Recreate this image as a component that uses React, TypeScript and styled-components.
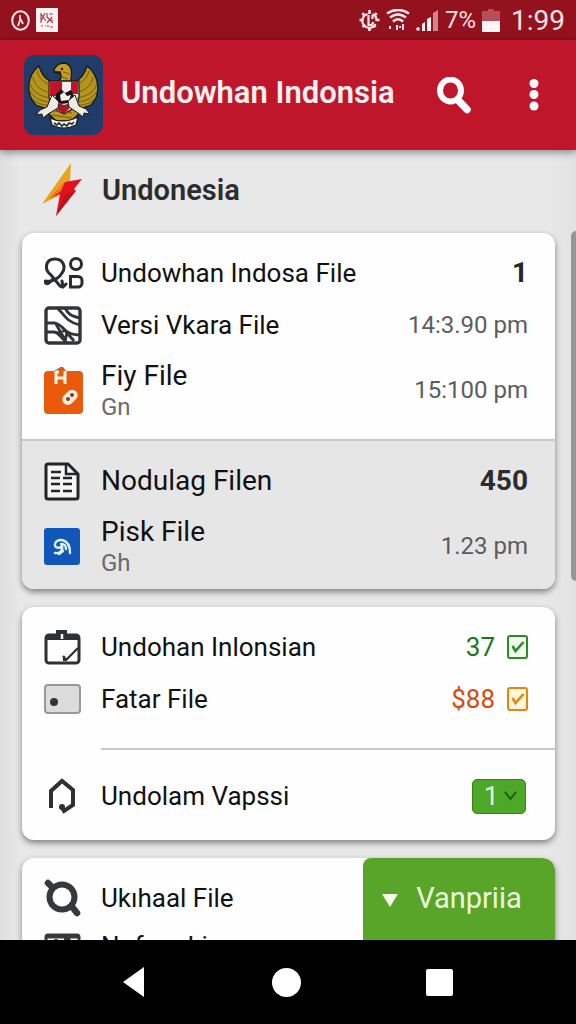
import React from 'react';
import styled, { createGlobalStyle, css } from 'styled-components';

const GlobalStyle = createGlobalStyle`
  *, *::before, *::after { box-sizing: border-box; }
  body { margin: 0; background: #000; font-family: Roboto, "Liberation Sans", sans-serif; color: #111; }
  button, select, input { font: inherit; margin: 0; }
  h1, h2, p, ul { margin: 0; padding: 0; }
  svg { display: block; flex: none; }
`;

const Screen = styled.div`
  display: flex;
  flex-direction: column;
  height: 100vh;
  min-height: 480px;
  overflow: hidden;
`;

const StatusBar = styled.div`
  display: flex;
  align-items: center;
  justify-content: space-between;
  flex: none;
  height: 40px;
  padding: 0 11px;
  background: #94121d;
  color: #fbe3e4;
  font-size: 24px;
`;

const StatusGroup = styled.div`
  display: flex;
  align-items: center;
  gap: 6px;
`;

const Clock = styled.span`
  margin-left: 5px;
  font-size: 28px;
`;

const AppBar = styled.header`
  position: relative;
  z-index: 1;
  display: flex;
  align-items: center;
  flex: none;
  height: 110px;
  padding: 0 18px 0 24px;
  background: #bf162b;
  box-shadow: 0 2px 8px rgba(0, 0, 0, 0.45);
`;

const AppTitle = styled.h1`
  flex: 1;
  padding: 0 0 4px 18px;
  color: #fff0f1;
  font-size: 31px;
  font-weight: 600;
  line-height: 40px;
  white-space: nowrap;
`;

const IconButton = styled.button`
  display: flex;
  align-items: center;
  justify-content: center;
  width: 48px;
  height: 48px;
  padding: 0;
  border: 0;
  background: transparent;
  color: #fff;
`;

const BarActions = styled.div`
  display: flex;
  gap: 32px;
  align-items: center;
`;

const Content = styled.main`
  position: relative;
  flex: 1;
  min-height: 0;
  overflow: hidden;
  padding: 0 21px 0 22px;
  background: linear-gradient(90deg, #dededf, #e8e8e8 20px, #e8e8e8 550px, #e2e2e3);
`;

const ScrollThumb = styled.div`
  position: absolute;
  top: 81px;
  right: 0;
  width: 5px;
  height: 350px;
  border-radius: 5px 0 0 5px;
  background: #969697;
`;

const SectionHead = styled.div`
  display: flex;
  align-items: center;
  gap: 19px;
  height: 83px;
  padding: 0 0 4px 19px;
`;

const SectionTitle = styled.h2`
  color: #2c2d2f;
  font-size: 29px;
  font-weight: 600;
  line-height: 36px;
`;

const Card = styled.section`
  display: flex;
  margin-bottom: 18px;
  border-radius: 12px;
  background: #fefefe;
  box-shadow: 0 3px 6px rgba(0, 0, 0, 0.45);
  overflow: hidden;
`;

const CardBody = styled.div`
  flex: 1;
  min-width: 0;
`;

const Group = styled.ul<{ $shaded?: boolean; $bottom: number }>`
  list-style: none;
  padding: 14px 27px ${p => p.$bottom}px 22px;
  ${p => p.$shaded && css`
    border-top: 2px solid #c9c9ca;
    background: #e6e6e7;
  `}
`;

const rowHeights = { compact: 44, normal: 52, tall: 78 };

const Row = styled.li<{ $size: keyof typeof rowHeights }>`
  display: flex;
  align-items: center;
  height: ${p => rowHeights[p.$size]}px;
`;

const IconSlot = styled.span`
  display: flex;
  align-items: center;
  flex: none;
  width: 57px;
`;

const Labels = styled.div`
  flex: 1;
  min-width: 0;
  white-space: nowrap;
`;

const Label = styled.p<{ $large?: boolean }>`
  font-size: ${p => (p.$large ? 28 : 26)}px;
  line-height: 34px;
`;

const SubLabel = styled.p`
  color: #6a6a6b;
  font-size: 24px;
  line-height: 28px;
`;

const Value = styled.span<{ $tone?: string; $strong?: boolean }>`
  color: ${p => p.$tone || '#5c5c5e'};
  font-size: ${p => (p.$strong ? 28 : 26)}px;
  font-weight: ${p => (p.$strong ? 700 : 400)};
  line-height: 34px;
  white-space: nowrap;
`;

const Time = styled(Value)`
  font-size: 24px;
`;

const Divider = styled.hr`
  height: 2px;
  margin: 23px 0 6px 79px;
  border: 0;
  background: #c8c8ca;
`;

const Check = styled.label<{ $tone: string; $fill: string }>`
  display: flex;
  align-items: center;
  gap: 12px;
  color: ${p => p.$tone};

  input {
    appearance: none;
    width: 21px;
    height: 24px;
    border: 2px solid ${p => p.$tone};
    border-radius: 3px;
    background: ${p => p.$fill};
  }
`;

const CheckBox = styled.span`
  display: grid;

  > * { grid-area: 1 / 1; place-self: center; }
  svg { pointer-events: none; }
`;

const Picker = styled.label`
  display: grid;
  align-items: center;
  width: 54px;
  height: 35px;
  margin-right: 2px;

  > * { grid-area: 1 / 1; }
  svg { justify-self: end; margin-right: 9px; pointer-events: none; }
`;

const PickerSelect = styled.select`
  appearance: none;
  width: 100%;
  height: 100%;
  padding: 0 0 0 11px;
  border: 1px solid #35801c;
  border-radius: 5px;
  background: #4ca826;
  color: #efffe6;
  font-size: 26px;
  line-height: 32px;
`;

const MenuButton = styled.button`
  display: flex;
  align-items: flex-start;
  gap: 18px;
  flex: none;
  width: 36%;
  padding: 22px 0 0 19px;
  border: 0;
  border-radius: 8px 12px 0 0;
  background: #58a529;
  color: #ecfbdd;
  font-size: 29px;
  line-height: 36px;
  white-space: nowrap;

  svg { margin-top: 14px; }
`;

const NavBar = styled.nav`
  display: flex;
  align-items: center;
  justify-content: center;
  gap: 105px;
  flex: none;
  height: 84px;
  padding-right: 3px;
  background: #000;
`;

const Emblem = () => (
  <svg width="79" height="80" viewBox="0 0 79 80" role="img" aria-label="Garuda">
    <rect width="79" height="80" rx="10" fill="#203c69" />
    <g stroke="#151a1c" strokeWidth="1.3" strokeLinejoin="round">
      <path d="M15 11C3 20 1 39 12 50l14 5 3-14-3-15c-6-3-9-8-11-15z" fill="#b7941c" />
      <path d="M63 11c12 9 15 28 4 39l-15 5-3-14 3-15c6-3 9-8 11-15z" fill="#b7941c" />
      <path d="M32 29c5-4 6-8 4-11l-6-1c0-5 5-9 10-9 8 1 9 9 6 21z" fill="#c49c1e" />
      <path d="M27 49l-3 9 8 8h15l9-8-5-10z" fill="#b99722" />
      <path d="M25 26h30v15c0 9-7 14-15 18-9-4-15-9-15-18z" fill="#f2eeee" />
    </g>
    <g fill="none" stroke="#6b5618" strokeWidth="0.9">
      <path d="M9 22c1 8 7 13 17 16M6 29c3 8 9 12 20 14M6 36c4 7 10 10 20 11M9 44c5 5 9 6 16 6M13 16c2 7 6 11 13 14" />
      <path d="M69 22c-1 8-7 13-17 16M73 29c-3 8-9 12-20 14M73 36c-4 7-10 10-20 11M70 44c-5 5-9 6-16 6M65 16c-2 7-6 11-13 14" />
      <path d="M38 22l6 2M39 17l7 2M28 60l20 3M30 56l18 2" />
    </g>
    <path d="M26 27h12v14H26zM47 27h7v12h-7z" fill="#c4122b" />
    <path d="M32 39l5-5 4 4 6-3 3 6-5 7-8 1-6-4z" fill="#151012" />
    <path d="M36 40l4-3 3 4 4-1-2 5-8 1z" fill="#f4eeee" />
    <path d="M32 47l8 3 7-2-2 6-5 5-6-4z" fill="#ad1424" />
    <path d="M28 40l-5 12-7 3-4 5 6-1 1 4 5-4 10-6 1-6zM51 40l4 11 7 3 4 5-6-1-1 4-5-4-9-6-1-6z" fill="#eeeae4" stroke="#1b1b1d" strokeWidth="1" />
    <path d="M26 63c8 4 18 4 28-1l-2 8c-8 4-16 4-24 0z" fill="#f6f1e8" stroke="#191b1d" strokeWidth="1.2" />
    <path d="M30 68l3 2 2-2 3 3 2-2 3 2 2-3 3 1 2-2" fill="none" stroke="#252525" strokeWidth="1.6" />
    <circle cx="38" cy="14" r="1.2" fill="#181818" />
    <path d="M31 17l5 0 1 3" fill="none" stroke="#181818" strokeWidth="1.3" />
  </svg>
);

const AlertIcon = () => (
  <svg width="19" height="21" viewBox="0 0 19 21" fill="none" stroke="#fde8e8" strokeWidth="2">
    <ellipse cx="9.5" cy="10.5" rx="8.3" ry="9.2" />
    <path d="M9 5v5l-2 6M9.5 9l2.5 5" strokeWidth="1.8" />
  </svg>
);

const PictureIcon = () => (
  <svg width="22" height="24" viewBox="0 0 22 24">
    <rect width="22" height="24" rx="1" fill="#fff4f3" />
    <path d="M5 5v10M5 6l5 7M9 5l-4 8M11 5v5M13 6h4M11 9l6 6M16 9l-5 6M13 12h4M5 18h2M9 18h1M12 17v2M14 19h3" fill="none" stroke="#a54450" strokeWidth="1.2" />
  </svg>
);

const GearIcon = () => (
  <svg width="21" height="23" viewBox="0 0 20 23" fill="none" stroke="#fde8e8" strokeWidth="2.2">
    <path d="M8 5a7 7 0 1 0 8 10M13 5a7 7 0 0 1 4 7M9 6v10h3l2-3M13 6v4" />
    <path d="M10 1v4M3 4l2 3M0 11h4M3 18l3-2M10 18v4M16 18l-2-2M20 11h-3M17 4l-2 3" strokeWidth="2.6" />
  </svg>
);

const WifiIcon = () => (
  <svg width="24" height="22" viewBox="0 0 24 22" fill="none" stroke="#fbe9e9" strokeWidth="2.6">
    <path d="M1 4.5c7-4.5 15-4.5 22 0M4 8.5c5-4 11-4 16 0M7 12.5c3-3 7-3 10 0" />
    <path d="M11 16v5M4 17v3M17 15v6M14 17v2" fill="#fff" strokeWidth="2" />
  </svg>
);

const SignalIcon = () => (
  <svg width="23" height="21" viewBox="0 0 23 21" fill="#fff3f3">
    <circle cx="2" cy="19" r="1.8" />
    <path d="M6 14l3-2v9H6zM11 9l4-2v14h-4z" />
    <path d="M17 3l5-3v21h-5z" fill="#cf858c" />
  </svg>
);

const BatteryIcon = () => (
  <svg width="18" height="23" viewBox="0 0 18 23">
    <path d="M6 0h6v2h6v21H0V2h6z" fill="#b64f59" />
    <path d="M0 12h18v11H0z" fill="#fff5f5" />
  </svg>
);

const SearchIcon = () => (
  <svg width="34" height="37" viewBox="0 0 34 37" fill="none" stroke="currentColor" strokeLinecap="round">
    <ellipse cx="13.5" cy="13.5" rx="10.5" ry="11" strokeWidth="6" />
    <path d="M21 23l9 9.5" strokeWidth="7.5" />
  </svg>
);

const MoreIcon = () => (
  <svg width="10" height="32" viewBox="0 0 10 32" fill="currentColor">
    <circle cx="5" cy="4.5" r="4.5" />
    <circle cx="5" cy="15.5" r="4.5" />
    <circle cx="5" cy="27" r="4.5" />
  </svg>
);

const BoltIcon = () => (
  <svg width="42" height="54" viewBox="0 0 42 54">
    <path d="M30 0L1 41l18-9 10-14z" fill="#eaa21f" />
    <path d="M24 19l17-3-8 10 2 2-20 25 4-22-10 4z" fill="#e0121b" />
    <path d="M20 28L7 37l17-18z" fill="#f07b20" />
    <path d="M34 28L15 53l8-20z" fill="#b91420" />
  </svg>
);

const ShapesIcon = () => (
  <svg width="40" height="32" viewBox="0 0 40 32" fill="none" stroke="#2b2c2e" strokeWidth="3">
    <path d="M7 18C0 13 1 2 11 2c9 0 11 9 7 14-3 5-7 7-11 8-4 1-7-1-6 1 2 4 5 0 8-3M7 18l9 11c2 2 4 1 6-2M18 24l1 6" strokeLinecap="round" />
    <circle cx="32" cy="7" r="5.5" />
    <path d="M26.5 19.5H34a4 4 0 0 1 4 4V26a4 4 0 0 1-4 4h-7.5z" />
  </svg>
);

const MapIcon = () => (
  <svg width="38" height="39" viewBox="0 0 38 39" fill="none" stroke="#333436" strokeWidth="2.8">
    <rect x="2" y="2" width="34" height="35" rx="3" strokeWidth="3.4" />
    <path d="M2 17h9c5 1 7 4 10 7 4 4 9 5 15 5M14 3c5 3 7 13 22 16M21 2c3 6 6 8 15 10M2 26h8c3 0 5 3 8 6s4 4 5 5M12 18l8 14M12 27l8-2M18 21l12 14M23 26l-2 10" />
  </svg>
);

const BagIcon = () => (
  <svg width="39" height="47" viewBox="0 0 39 47">
    <rect y="4" width="39" height="43" rx="4" fill="#e95a0c" />
    <path d="M10 5l8-5 4 5" fill="#e95a0c" stroke="#c95a20" strokeWidth="1.5" />
    <path d="M12 4v13M12 11h9M21 4v13M12 5h3" fill="none" stroke="#fff3e3" strokeWidth="3" />
    <rect x="18" y="25" width="17" height="11" rx="5.5" transform="rotate(-45 26 31)" fill="#fff0df" />
    <circle cx="24" cy="32" r="2" fill="#8a3b18" />
    <circle cx="28" cy="28" r="2" fill="#8a3b18" />
  </svg>
);

const DocumentIcon = () => (
  <svg width="36" height="39" viewBox="0 0 36 39" fill="none" stroke="#242527" strokeWidth="3">
    <path d="M4 2h20l10 10v23a2 2 0 0 1-2 2H4a2 2 0 0 1-2-2V4a2 2 0 0 1 2-2z" fill="#f6f6f6" />
    <path d="M22 2v10h12" strokeWidth="2.5" />
    <path d="M7 10h10M7 16h9M19 16h9M7 22h9M19 22h9M7 29h9M19 29h9" strokeWidth="2.5" />
  </svg>
);

const DiskIcon = () => (
  <svg width="36" height="37" viewBox="0 0 36 37" fill="none" stroke="#dff2fb" strokeWidth="2.4" strokeLinecap="round">
    <rect width="36" height="37" rx="3" fill="#1057b8" stroke="none" />
    <path d="M18 18c-2 3-8 2-7-2 1-6 15-7 15 9M17 16c3 5 0 10-6 9M15 26l4-3M18 16c2 0 4 2 4 5" />
  </svg>
);

const ClipboardIcon = () => (
  <svg width="37" height="35" viewBox="0 0 37 35" fill="none" stroke="#2f3032" strokeWidth="3">
    <rect x="2" y="5" width="33" height="28" rx="3" />
    <path d="M2 8h33" strokeWidth="4" />
    <path d="M12 9V0h11v9z" fill="#2f3032" stroke="none" />
    <path d="M18 4v5" stroke="#fff" strokeWidth="2.5" />
    <path d="M19 26l3 4 12-12M20 26v5" strokeWidth="2.2" />
  </svg>
);

const CardIcon = () => (
  <svg width="37" height="30" viewBox="0 0 37 30">
    <rect x="1" y="1" width="35" height="28" rx="3" fill="#dcdcdd" stroke="#98989a" strokeWidth="2" />
    <circle cx="10" cy="18" r="4" fill="#343436" />
  </svg>
);

const LoopIcon = () => (
  <svg width="37" height="36" viewBox="0 0 37 36" fill="none" stroke="#2f3032" strokeWidth="4">
    <path d="M7 30V13L18 3l11 9v15l-9 6-3-5" />
    <circle cx="18" cy="29" r="3" fill="#2f3032" stroke="none" />
  </svg>
);

const LensIcon = () => (
  <svg width="37" height="38" viewBox="0 0 37 38" fill="none" stroke="#37383a" strokeLinecap="round">
    <circle cx="18" cy="18" r="12.5" strokeWidth="6" />
    <path d="M4 4l3 3M29 29l4 5" strokeWidth="6.5" />
  </svg>
);

const TableIcon = () => (
  <svg width="37" height="26" viewBox="0 0 37 26" fill="none" stroke="#37383a" strokeWidth="3">
    <rect x="2" y="2" width="33" height="22" rx="2" />
    <path d="M2 4h33M12 6v18M20 7h5v17" />
  </svg>
);

const Tick = () => (
  <svg width="14" height="14" viewBox="0 0 14 14" fill="none" stroke="currentColor" strokeWidth="2.6">
    <path d="M1.5 6l3 5 8-9" />
  </svg>
);

type EntryProps = {
  icon: React.ReactNode;
  label: string;
  sub?: string;
  large?: boolean;
  size?: keyof typeof rowHeights;
  children?: React.ReactNode;
};

const Entry = ({ icon, label, sub, large, size = 'normal', children }: EntryProps) => (
  <Row $size={size}>
    <IconSlot>{icon}</IconSlot>
    <Labels>
      <Label $large={large}>{label}</Label>
      {sub && <SubLabel>{sub}</SubLabel>}
    </Labels>
    {children}
  </Row>
);

type CheckValueProps = { value: string; tone: string; frame: string; fill: string };

const CheckValue = ({ value, tone, frame, fill }: CheckValueProps) => (
  <Check $tone={frame} $fill={fill}>
    <Value $tone={tone}>{value}</Value>
    <CheckBox>
      <input type="checkbox" defaultChecked />
      <Tick />
    </CheckBox>
  </Check>
);

export default function App() {
  return (
    <Screen>
      <GlobalStyle />
      <StatusBar>
        <StatusGroup>
          <AlertIcon />
          <PictureIcon />
        </StatusGroup>
        <StatusGroup>
          <GearIcon />
          <WifiIcon />
          <SignalIcon />
          <span>7%</span>
          <BatteryIcon />
          <Clock>1:99</Clock>
        </StatusGroup>
      </StatusBar>
      <AppBar>
        <Emblem />
        <AppTitle>Undowhan Indonsia</AppTitle>
        <BarActions>
          <IconButton aria-label="Search"><SearchIcon /></IconButton>
          <IconButton aria-label="More"><MoreIcon /></IconButton>
        </BarActions>
      </AppBar>
      <Content>
        <SectionHead>
          <BoltIcon />
          <SectionTitle>Undonesia</SectionTitle>
        </SectionHead>
        <Card>
          <CardBody>
            <Group $bottom={10}>
              <Entry icon={<ShapesIcon />} label="Undowhan Indosa File">
                <Value $strong $tone="#252628">1</Value>
              </Entry>
              <Entry icon={<MapIcon />} label="Versi Vkara File">
                <Time>14:3.90 pm</Time>
              </Entry>
              <Entry icon={<BagIcon />} label="Fiy File" sub="Gn" size="tall" large>
                <Time>15:100 pm</Time>
              </Entry>
            </Group>
            <Group $shaded $bottom={4}>
              <Entry icon={<DocumentIcon />} label="Nodulag Filen" large>
                <Value $strong $tone="#2b2c2e">450</Value>
              </Entry>
              <Entry icon={<DiskIcon />} label="Pisk File" sub="Gh" size="tall" large>
                <Time>1.23 pm</Time>
              </Entry>
            </Group>
          </CardBody>
        </Card>
        <Card>
          <CardBody>
            <Group $bottom={0}>
              <Entry icon={<ClipboardIcon />} label="Undohan Inlonsian">
                <CheckValue value="37" tone="#17791b" frame="#2c8a2c" fill="#effceb" />
              </Entry>
              <Entry icon={<CardIcon />} label="Fatar File">
                <CheckValue value="$88" tone="#d9480f" frame="#e58413" fill="#fff6dc" />
              </Entry>
            </Group>
            <Divider />
            <Group $bottom={18}>
              <Entry icon={<LoopIcon />} label="Undolam Vapssi">
                <Picker>
                  <PickerSelect aria-label="Undolam Vapssi" defaultValue="1">
                    <option>1</option>
                  </PickerSelect>
                  <svg width="13" height="10" viewBox="0 0 13 10" fill="none" stroke="#1e5a12" strokeWidth="2">
                    <path d="M1 1l5.5 7L12 1" />
                  </svg>
                </Picker>
              </Entry>
            </Group>
          </CardBody>
        </Card>
        <Card>
          <CardBody>
            <Group $bottom={14}>
              <Entry icon={<LensIcon />} label="Ukıhaal File" />
              <Entry icon={<TableIcon />} label="Nofom Lin" size="compact" />
            </Group>
          </CardBody>
          <MenuButton>
            <svg width="16" height="13" viewBox="0 0 16 13" fill="#f5ffe8">
              <path d="M0 0h16L8 13z" />
            </svg>
            Vanpriia
          </MenuButton>
        </Card>
        <ScrollThumb />
      </Content>
      <NavBar>
        <IconButton aria-label="Back">
          <svg width="22" height="30" viewBox="0 0 22 30" fill="currentColor">
            <path d="M21 0v30L0 15z" />
          </svg>
        </IconButton>
        <IconButton aria-label="Home">
          <svg width="29" height="29" viewBox="0 0 29 29" fill="currentColor">
            <circle cx="14.5" cy="14.5" r="14.5" />
          </svg>
        </IconButton>
        <IconButton aria-label="Recent apps">
          <svg width="27" height="27" viewBox="0 0 27 27" fill="currentColor">
            <rect width="27" height="27" rx="2" />
          </svg>
        </IconButton>
      </NavBar>
    </Screen>
  );
}
